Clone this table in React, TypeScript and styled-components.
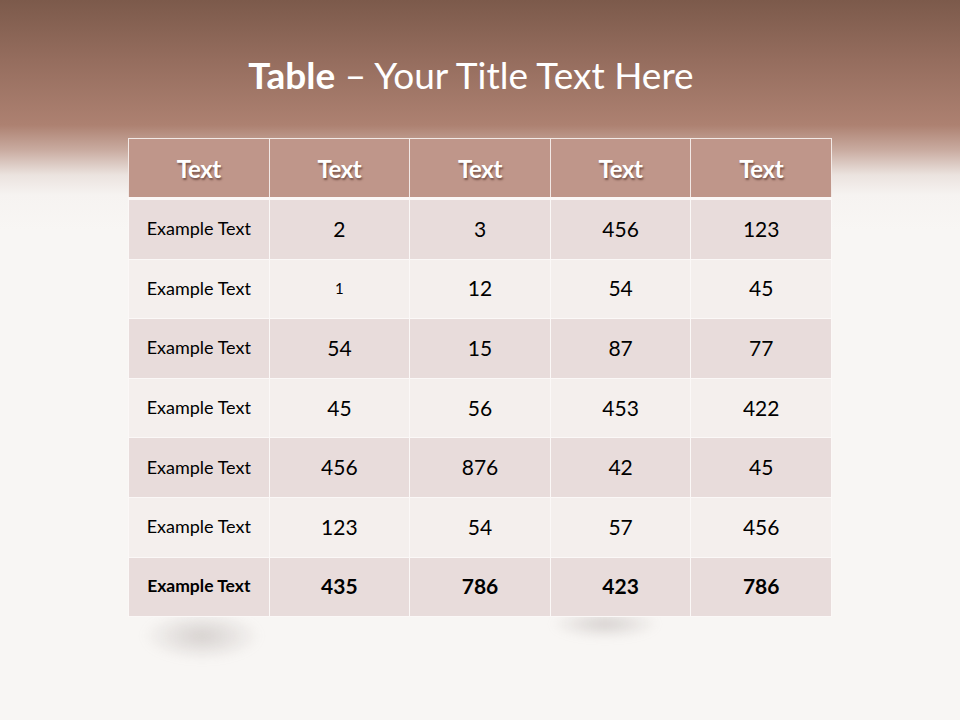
import styled, { createGlobalStyle } from 'styled-components';

const GlobalStyle = createGlobalStyle`
  html, body {
    margin: 0;
    padding: 0;
    background: #f8f6f4;
  }
`;

const header = ['Text', 'Text', 'Text', 'Text', 'Text'];

const rows: string[][] = [
  ['Example Text', '2', '3', '456', '123'],
  ['Example Text', '1', '12', '54', '45'],
  ['Example Text', '54', '15', '87', '77'],
  ['Example Text', '45', '56', '453', '422'],
  ['Example Text', '456', '876', '42', '45'],
  ['Example Text', '123', '54', '57', '456'],
];

const totals = ['Example Text', '435', '786', '423', '786'];

function App() {
  return (
    <>
      <GlobalStyle />
      <Slide>
        <TitleBar>
          <Title>
            <b>Table</b> – Your Title Text Here
          </Title>
        </TitleBar>
        <TableWrap>
          <Blob $left={14} $top={-6} $w={120} $h={50} />
          <Blob $left={422} $top={-8} $w={110} $h={30} />
          <DataTable>
            <thead>
              <tr>
                {header.map((h, i) => (
                  <HeadCell key={i}>{h}</HeadCell>
                ))}
              </tr>
            </thead>
            <tbody>
              {rows.map((row, r) => (
                <Row key={r} $odd={r % 2 === 0}>
                  {row.map((c, i) => (
                    <Cell key={i} $label={i === 0} $small={c === '1'}>
                      {c}
                    </Cell>
                  ))}
                </Row>
              ))}
              <Row $odd>
                {totals.map((c, i) => (
                  <Cell key={i} $label={i === 0} $bold>
                    {c}
                  </Cell>
                ))}
              </Row>
            </tbody>
          </DataTable>
        </TableWrap>
      </Slide>
    </>
  );
}

export default App;

const Slide = styled.div`
  width: 960px;
  height: 720px;
  overflow: hidden;
  display: flex;
  flex-direction: column;
  align-items: center;
  font-family: Lato, 'Open Sans', sans-serif;
  background: linear-gradient(
    180deg,
    #7c5a4b 0px,
    #956d5e 60px,
    #ad8171 125px,
    #c9aba0 150px,
    #ebe3df 175px,
    #f6f3f1 195px,
    #f8f6f4 230px,
    #f8f6f4 100%
  );
`;

const TitleBar = styled.div`
  height: 138px;
  width: 100%;
  display: flex;
  justify-content: center;
  padding: 51px 18px 0 0;
  box-sizing: border-box;
`;

const Title = styled.h1`
  margin: 0;
  font-family: Lato, 'Open Sans', sans-serif;
  font-weight: 400;
  font-size: 37px;
  line-height: 48px;
  color: #ffffff;
  b {
    font-weight: 700;
  }
`;

const TableWrap = styled.div`
  position: relative;
  width: 704px;
`;

const Blob = styled.div<{ $left: number; $top: number; $w: number; $h: number }>`
  position: absolute;
  left: ${({ $left }) => $left}px;
  top: calc(100% + ${({ $top }) => $top}px);
  width: ${({ $w }) => $w}px;
  height: ${({ $h }) => $h}px;
  border-radius: 50%;
  background: radial-gradient(ellipse at center, rgba(160, 150, 148, 0.38), rgba(200, 195, 192, 0) 70%);
  filter: blur(4px);
`;

const DataTable = styled.table`
  position: relative;
  width: 704px;
  border-collapse: collapse;
  table-layout: fixed;
`;

const HeadCell = styled.th`
  height: 58px;
  padding: 0;
  background: #bf968a;
  border: 1px solid #f2e9e6;
  border-bottom: 3px solid #fbf8f7;
  color: #ffffff;
  font-family: Lato, 'Open Sans', sans-serif;
  font-weight: 700;
  font-size: 24px;
  letter-spacing: -0.4px;
  text-shadow: 1px 2px 2px rgba(60, 30, 20, 0.55);
`;

const Row = styled.tr<{ $odd?: boolean }>`
  background: ${({ $odd }) => ($odd ? '#e8dcdb' : '#f4efed')};
`;

const Cell = styled.td<{ $label?: boolean; $bold?: boolean; $small?: boolean }>`
  height: 56.6px;
  padding: 0 0 2px;
  border: 1px solid #fbf8f7;
  text-align: center;
  color: #000000;
  font-family: Lato, 'Open Sans', sans-serif;
  font-weight: ${({ $bold }) => ($bold ? 700 : 400)};
  font-size: ${({ $label, $small, $bold }) =>
    $label ? ($bold ? '17.5px' : '18px') : $small ? '15px' : '21px'};
`;
